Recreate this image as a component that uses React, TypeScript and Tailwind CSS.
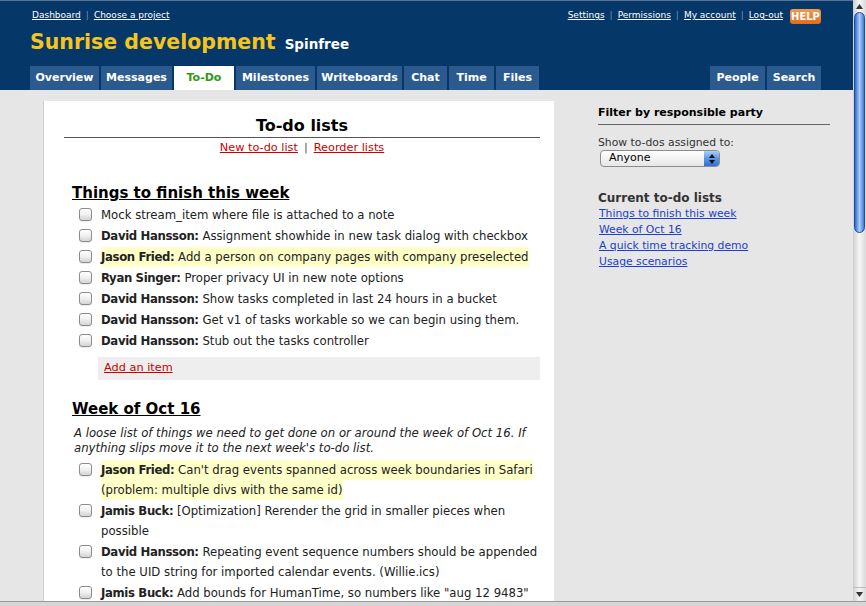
import React from 'react';

interface TodoItem {
    who?: string;
    text: string;
    hl?: boolean;
}

const thisWeek: TodoItem[] = [
    { text: 'Mock stream_item where file is attached to a note' },
    { who: 'David Hansson', text: 'Assignment showhide in new task dialog with checkbox' },
    { who: 'Jason Fried', text: 'Add a person on company pages with company preselected', hl: true },
    { who: 'Ryan Singer', text: 'Proper privacy UI in new note options' },
    { who: 'David Hansson', text: 'Show tasks completed in last 24 hours in a bucket' },
    { who: 'David Hansson', text: 'Get v1 of tasks workable so we can begin using them.' },
    { who: 'David Hansson', text: 'Stub out the tasks controller' },
];

const weekOf: TodoItem[] = [
    {
        who: 'Jason Fried',
        text: "Can't drag events spanned across week boundaries in Safari (problem: multiple divs with the same id)",
        hl: true,
    },
    { who: 'Jamis Buck', text: '[Optimization] Rerender the grid in smaller pieces when possible' },
    {
        who: 'David Hansson',
        text: 'Repeating event sequence numbers should be appended to the UID string for imported calendar events. (Willie.ics)',
    },
    {
        who: 'Jamis Buck',
        text: 'Add bounds for HumanTime, so numbers like "aug 12 9483" would not be parsed as years outside 1900..2100 for now',
    },
];

const leftTabs = [
    { label: 'Overview', w: 'w-[69px]' },
    { label: 'Messages', w: 'w-[71px]' },
    { label: 'To-Do', w: 'w-[60px]', active: true },
    { label: 'Milestones', w: 'w-[79px]' },
    { label: 'Writeboards', w: 'w-[85px]' },
    { label: 'Chat', w: 'w-[43px]' },
    { label: 'Time', w: 'w-[45px]' },
    { label: 'Files', w: 'w-[43px]' },
];

const rightTabs = [
    { label: 'People', w: 'w-[55px]' },
    { label: 'Search', w: 'w-[54px]' },
];

// Mac style checkbox
function Checkbox() {
    return (
        <span className="mt-[3px] inline-block h-[13px] w-[13px] shrink-0 rounded-[3px] border border-[#8c8c8c] bg-linear-to-b from-white via-[#f0f0f0] to-[#d4d4d4] shadow-[0_1px_0_rgba(0,0,0,0.08)]" />
    );
}

function Item({ item }: { item: TodoItem }) {
    return (
        <li className="mb-[1px] flex items-start leading-[20px]">
            <span className="ml-[15px] mr-[9px] flex">
                <Checkbox />
            </span>
            <span className="text-[#222]">
                <span className={item.hl ? 'bg-[#ffffc8] py-[3px] box-decoration-clone' : ''}>
                    {item.who && <b className="font-bold tracking-[-0.35px]">{item.who}: </b>}
                    {item.text}
                </span>
            </span>
        </li>
    );
}

function Tab({ label, w, active }: { label: string; w: string; active?: boolean }) {
    return (
        <div
            className={
                active
                    ? `${w} flex h-[24px] items-center justify-center bg-white text-[#2f9a14]`
                    : `${w} flex h-[24px] items-center justify-center bg-[#2b5b8e] text-white`
            }
        >
            {label}
        </div>
    );
}

function Scrollbar() {
    return (
        <div className="flex w-[13px] flex-col bg-linear-to-r from-[#cfcfcf] via-[#f6f6f6] to-[#dadada]">
            <div className="flex h-[12px] items-center justify-center">
                <svg width="7" height="5" viewBox="0 0 7 5">
                    <path d="M3.5 0 L7 5 L0 5 Z" fill="#333" />
                </svg>
            </div>
            <div className="mx-[1px] h-[221px] rounded-full border border-[#2149a8] bg-linear-to-r from-[#3467cc] via-[#a8cff8] to-[#4478d6]" />
            <div className="flex-1" />
            <div className="flex h-[14px] items-center justify-center border-t border-[#bbb]">
                <svg width="7" height="5" viewBox="0 0 7 5">
                    <path d="M0 0 L7 0 L3.5 5 Z" fill="#333" />
                </svg>
            </div>
        </div>
    );
}

export default function App() {
    return (
        <div className="flex h-[606px] w-[866px] flex-col overflow-hidden font-['DejaVu_Sans',sans-serif]">
            <div className="flex h-[601px] shrink-0">
                <div className="flex flex-1 flex-col overflow-hidden bg-[#e6e6e6]">
                    {/* header */}
                    <div className="h-[90px] shrink-0 border-t border-[#5d7391] bg-[#053769] pl-[30px] pr-[32px]">
                        <div className="mt-[7px] flex h-[16px] items-center justify-between text-[9px] text-white">
                            <div className="flex items-center pl-[2px]">
                                <span className="underline">Dashboard</span>
                                <span className="mx-[5px] text-[#7d90ab]">|</span>
                                <span className="underline">Choose a project</span>
                            </div>
                            <div className="flex items-center">
                                <span className="underline">Settings</span>
                                <span className="mx-[5px] text-[#7d90ab]">|</span>
                                <span className="underline">Permissions</span>
                                <span className="mx-[5px] text-[#7d90ab]">|</span>
                                <span className="underline">My account</span>
                                <span className="mx-[5px] text-[#7d90ab]">|</span>
                                <span className="underline">Log-out</span>
                                <span className="ml-[7px] flex h-[15px] w-[31px] items-center justify-center rounded-[3px] bg-linear-to-b from-[#f39a4c] to-[#dd6d1c] text-[10px] font-bold text-white">
                                    HELP
                                </span>
                            </div>
                        </div>
                        <div className="mt-[6px] flex h-[24px] items-baseline">
                            <span className="text-[20.5px] font-bold leading-[24px] text-[#f6c51c]">
                                Sunrise development
                            </span>
                            <span className="ml-[9px] text-[13.5px] font-bold text-white">Spinfree</span>
                        </div>
                        <div className="mt-[12px] flex justify-between text-[11px] font-bold">
                            <div className="flex gap-[2px]">
                                {leftTabs.map((t) => (
                                    <Tab key={t.label} {...t} />
                                ))}
                            </div>
                            <div className="flex gap-[2px]">
                                {rightTabs.map((t) => (
                                    <Tab key={t.label} {...t} />
                                ))}
                            </div>
                        </div>
                    </div>

                    {/* body */}
                    <div className="flex flex-1 gap-[44px] pl-[44px]">
                        <div className="mt-[11px] w-[510px] bg-white pl-[20px] pr-[14px] text-[11.7px] shadow-[-1px_0_0_#d0d0d0]">
                            <h1 className="mt-[15px] border-b border-[#555] pb-[1px] text-center text-[16px] font-bold leading-[20px] text-black">
                                To-do lists
                            </h1>
                            <div className="mt-[3px] text-center text-[11.3px] leading-[14px] text-[#cc0000]">
                                <span className="underline">New to-do list</span>
                                <span className="mx-[6px] text-[#555]">|</span>
                                <span className="underline">Reorder lists</span>
                            </div>

                            <h2 className="mt-[29px] ml-[8px] text-[15px] font-bold leading-[18px] text-black underline">
                                Things to finish this week
                            </h2>
                            <ul className="mt-[3px]">
                                {thisWeek.map((item, i) => (
                                    <Item key={i} item={item} />
                                ))}
                            </ul>
                            <div className="ml-[34px] mt-[6px] flex h-[23px] items-center bg-[#eeeeee] pl-[6px]">
                                <span className="text-[11.3px] text-[#cc0000] underline">Add an item</span>
                            </div>

                            <h2 className="mt-[20px] ml-[8px] text-[15px] font-bold leading-[18px] text-black underline">
                                Week of Oct 16
                            </h2>
                            <p className="mt-[8px] ml-[10px] text-[11.7px] italic leading-[15px] text-[#222]">
                                A loose list of things we need to get done on or around the week of Oct 16. If
                                anything slips move it to the next week's to-do list.
                            </p>
                            <ul className="mt-[4px]">
                                {weekOf.map((item, i) => (
                                    <Item key={i} item={item} />
                                ))}
                            </ul>
                        </div>

                        {/* sidebar */}
                        <div className="mt-[16px] w-[232px] text-[10.8px] text-[#333]">
                            <h3 className="border-b border-[#666] pb-[4px] text-[11px] font-bold leading-[14px] text-black">
                                Filter by responsible party
                            </h3>
                            <div className="mt-[11px] leading-[14px]">Show to-dos assigned to:</div>
                            <div className="ml-[2px] flex h-[17px] w-[120px] items-center rounded-[4px] border border-[#8d8d8d] bg-linear-to-b from-white to-[#e6e6e6] text-[11px] text-black">
                                <span className="pl-[8px]">Anyone</span>
                                <span className="ml-auto flex h-full w-[15px] items-center justify-center rounded-r-[3px] bg-linear-to-b from-[#a9d0fa] via-[#5b96e6] to-[#2f6fd2]">
                                    <svg width="6" height="10" viewBox="0 0 6 10">
                                        <path d="M3 0 L6 4 L0 4 Z M0 6 L6 6 L3 10 Z" fill="#111" />
                                    </svg>
                                </span>
                            </div>
                            <h3 className="mt-[23px] text-[12px] font-bold leading-[16px] text-[#333]">
                                Current to-do lists
                            </h3>
                            <ul className="ml-[1px] leading-[16px] text-[#1d3fc9]">
                                <li className="underline">Things to finish this week</li>
                                <li className="underline">Week of Oct 16</li>
                                <li className="underline">A quick time tracking demo</li>
                                <li className="underline">Usage scenarios</li>
                            </ul>
                        </div>
                    </div>
                </div>
                <Scrollbar />
            </div>
            <div className="h-[5px] shrink-0 border-t border-[#9a9a9a] bg-[#d6d6d6]" />
        </div>
    );
}
